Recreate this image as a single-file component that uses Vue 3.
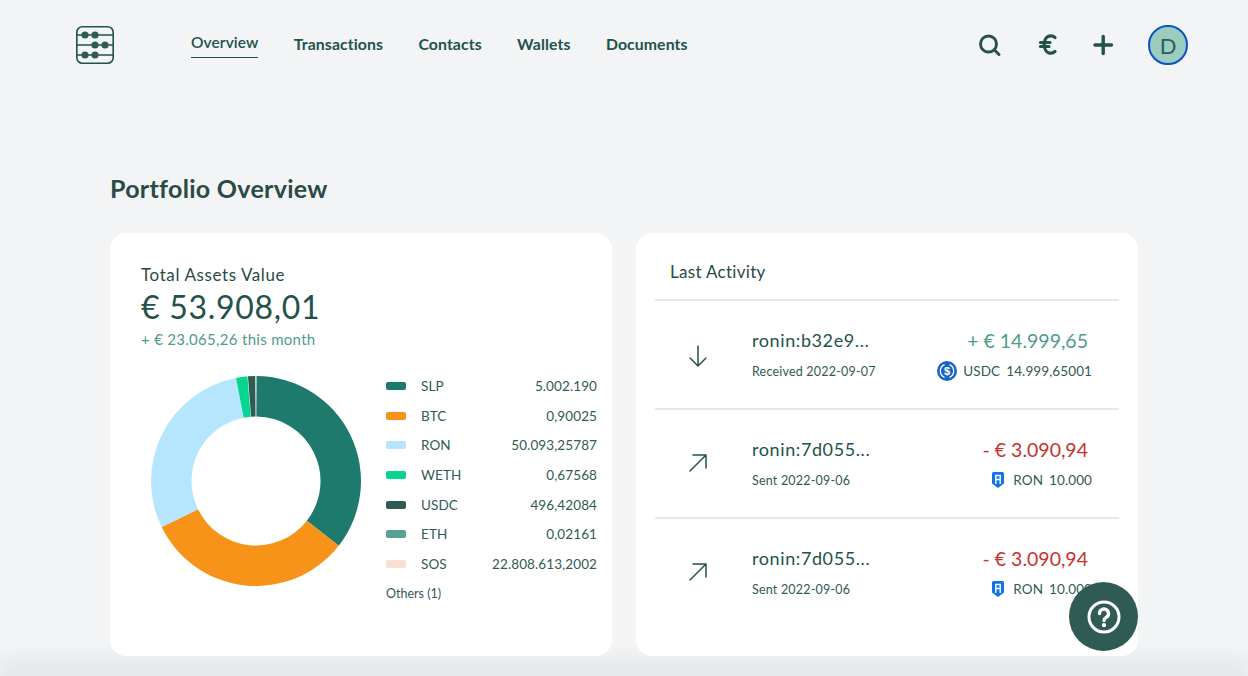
<script setup>
const tabs = ['Overview', 'Transactions', 'Contacts', 'Wallets', 'Documents']
const legend = [
  { name: 'SLP', value: '5.002.190', color: '#1f7a6e' },
  { name: 'BTC', value: '0,90025', color: '#f79319' },
  { name: 'RON', value: '50.093,25787', color: '#b5e6fd' },
  { name: 'WETH', value: '0,67568', color: '#06d58f' },
  { name: 'USDC', value: '496,42084', color: '#2f5b54' },
  { name: 'ETH', value: '0,02161', color: '#58a193' },
  { name: 'SOS', value: '22.808.613,2002', color: '#f8dfd2' },
]
const segments = [
  { from: 0.3, to: 128, color: '#1f7a6e' },
  { from: 128, to: 244, color: '#f79319' },
  { from: 244, to: 349, color: '#b5e6fd' },
  { from: 349, to: 355.3, color: '#06d58f' },
  { from: 355.6, to: 359.6, color: '#2f5b54' },
]
function pt(r, a) {
  const t = (a * Math.PI) / 180
  return `${(106 + r * Math.sin(t)).toFixed(2)} ${(106 - r * Math.cos(t)).toFixed(2)}`
}
function arc(s) {
  const large = s.to - s.from > 180 ? 1 : 0
  return `M${pt(105, s.from)}A105 105 0 ${large} 1 ${pt(105, s.to)}L${pt(64.5, s.to)}A64.5 64.5 0 ${large} 0 ${pt(64.5, s.from)}Z`
}
const activity = [
  { addr: 'ronin:b32e9...', sub: 'Received 2022-09-07', amount: '+ € 14.999,65', cls: 'pos', token: 'USDC', qty: '14.999,65001', dir: 'in' },
  { addr: 'ronin:7d055...', sub: 'Sent 2022-09-06', amount: '- € 3.090,94', cls: 'neg', token: 'RON', qty: '10.000', dir: 'out' },
  { addr: 'ronin:7d055...', sub: 'Sent 2022-09-06', amount: '- € 3.090,94', cls: 'neg', token: 'RON', qty: '10.000', dir: 'out' },
]
</script>

<template>
  <div class="page">
    <header class="topbar">
      <svg class="logo" width="38" height="38" viewBox="0 0 38 38" fill="none" stroke="#22524a" stroke-width="1.6">
        <rect x="0.8" y="0.8" width="36.4" height="36.4" rx="5.5" />
        <path d="M1 9h36M1 19h36M1 29h36" />
        <g fill="#2f5b54" stroke="none">
          <circle cx="9" cy="9" r="3.6" /><circle cx="19" cy="9" r="3.6" />
          <circle cx="19" cy="19" r="3.6" /><circle cx="29" cy="19" r="3.6" />
          <circle cx="9" cy="29" r="3.6" /><circle cx="19" cy="29" r="3.6" />
        </g>
      </svg>
      <nav class="tabs">
        <a v-for="(t, i) in tabs" :key="t" class="tab" :class="{ active: i === 0 }">{{ t }}</a>
      </nav>
      <div class="actions">
        <svg width="24" height="24" viewBox="0 0 24 24" fill="none" stroke="#22524a" stroke-width="2.9" stroke-linecap="round">
          <circle cx="10.500" cy="11" r="8" /><path d="M16.500 17l4.500 4.500" />
        </svg>
        <svg width="24" height="24" viewBox="0 0 24 24" fill="none" stroke="#22524a" stroke-width="3.2" stroke-linecap="round">
          <path d="M20 4.500C18.800 3.200 17.300 2.800 15.800 2.800 11.800 2.800 9.200 6.400 9.200 11.500s2.600 8.700 6.600 8.700c1.500 0 3-.5 4.200-1.800M5.500 9.500h9.500M5.500 13.500h8.500" />
        </svg>
        <svg width="24" height="24" viewBox="0 0 24 24" fill="none" stroke="#22524a" stroke-width="3.4" stroke-linecap="round">
          <path d="M11.200 3.500v17M3 12h16.500" />
        </svg>
        <div class="avatar">D</div>
      </div>
    </header>

    <main class="content">
      <h1 class="title">Portfolio Overview</h1>
      <div class="cards">
        <section class="card assets">
          <div class="assets-label">Total Assets Value</div>
          <div class="assets-value">€ 53.908,01</div>
          <div class="assets-delta">+ € 23.065,26 this month</div>
          <div class="chart-row">
            <svg class="donut" width="212" height="212" viewBox="0 0 212 212">
              <path v-for="s in segments" :key="s.from" :d="arc(s)" :fill="s.color" />
            </svg>
            <div class="legend">
              <div v-for="l in legend" :key="l.name" class="legend-row">
                <span class="swatch" :style="{ background: l.color }"></span>
                <span class="legend-name">{{ l.name }}</span>
                <span class="legend-value">{{ l.value }}</span>
              </div>
              <div class="others">Others (1)</div>
            </div>
          </div>
        </section>

        <section class="card activity">
          <div class="activity-head">Last Activity</div>
          <div v-for="(a, i) in activity" :key="i" class="row">
            <div class="dir">
              <svg v-if="a.dir === 'in'" width="22" height="26" viewBox="0 0 22 26" fill="none" stroke="#22524a" stroke-width="1.5" stroke-linecap="round" stroke-linejoin="round">
                <path d="M11 3v20M3 15l8 8 8-8" />
              </svg>
              <svg v-else width="22" height="22" viewBox="0 0 22 22" fill="none" stroke="#22524a" stroke-width="1.5" stroke-linecap="round" stroke-linejoin="round">
                <path d="M3 19L19 3M6 3h13v13" />
              </svg>
            </div>
            <div class="who">
              <div class="addr">{{ a.addr }}</div>
              <div class="sub">{{ a.sub }}</div>
            </div>
            <div class="money">
              <div class="amount" :class="a.cls">{{ a.amount }}</div>
              <div class="token">
                <svg v-if="a.token === 'USDC'" class="usdc" width="20" height="20" viewBox="0 0 20 20">
                  <circle cx="10" cy="10" r="10" fill="#1866c0" />
                  <path d="M7.500 3.600a7 7 0 0 0 0 12.800M12.500 3.600a7 7 0 0 1 0 12.800" fill="none" stroke="#fff" stroke-width="1.300" />
                  <text x="10" y="13.600" text-anchor="middle" class="usdc-sign">$</text>
                </svg>
                <svg v-else class="ron" width="12" height="16" viewBox="0 0 12 16">
                  <path d="M1.500 0h9A1.500 1.500 0 0 1 12 1.500V11.500L6 16 0 11.500V1.500A1.500 1.500 0 0 1 1.500 0z" fill="#1273ea" />
                  <path d="M3.800 12V3.500h4.400V12M3.800 7.500h4.400" fill="none" stroke="#fff" stroke-width="1.400" />
                </svg>
                <span class="token-name">{{ a.token }}</span>
                <span>{{ a.qty }}</span>
              </div>
            </div>
          </div>
        </section>
      </div>
    </main>

    <button class="help" aria-label="Help">
      <svg width="34" height="34" viewBox="0 0 34 34" fill="none" stroke="#fff">
        <circle cx="17" cy="17" r="15" stroke-width="3" />
        <path d="M12.500 13.500a4.500 4.500 0 1 1 7 3.700c-1.600 1.100-2.500 1.900-2.500 3.300" stroke-width="3.400" stroke-linecap="round" />
        <circle cx="17" cy="25.200" r="2.100" fill="#fff" stroke="none" />
      </svg>
    </button>
    <div class="bottom-shade"></div>
  </div>
</template>

<style>
html, body { margin: 0; background: #f2f4f6; }
</style>

<style scoped>
.page {
  position: relative;
  width: 1248px;
  height: 676px;
  overflow: hidden;
  background: #f2f4f6;
  color: #22524a;
  font-family: Lato, "Open Sans", sans-serif;
}
.topbar {
  display: flex;
  align-items: center;
  height: 38px;
  padding: 26px 60px 0 76px;
}
.logo { flex: none; }
.tabs {
  display: flex;
  align-items: center;
  gap: 35.400px;
  margin-left: 77px;
  transform: translateY(-1px);
}
.tab {
  font-size: 15.800px;
  font-weight: 700;
  line-height: 20px;
  color: #22524a;
  letter-spacing: 0.1px;
}
.tab.active {
  font-weight: 600;
  font-size: 15.500px;
  padding-bottom: 5px;
  margin-top: 2px;
  border-bottom: 1px solid #22524a;
}
.actions {
  display: flex;
  align-items: center;
  margin-left: auto;
  gap: 33px;
}
.avatar {
  width: 36px;
  height: 36px;
  border: 2px solid #0a53c4;
  border-radius: 50%;
  background: #9accc0;
  color: #2f5b54;
  display: flex;
  align-items: center;
  justify-content: center;
  font-size: 22px;
  margin-left: -1px;
}
.content {
  position: relative;
  z-index: 1;
  padding: 0 110px;
}
.title {
  margin: 0;
  padding-top: 109px;
  font-size: 25px;
  line-height: 30px;
  font-weight: 700;
  color: #2a4a45;
  letter-spacing: 0.3px;
}
.cards {
  display: grid;
  grid-template-columns: 502px 502px;
  gap: 24px;
  margin-top: 30px;
}
.card {
  background: #fff;
  border-radius: 16px;
  height: 423px;
  box-sizing: border-box;
}
.assets { padding: 32px 15px 0 31px; }
.assets-label { font-size: 17px; line-height: 20px; color: #2a4a45; letter-spacing: 0.6px; }
.assets-value {
  font-size: 32px;
  line-height: 40px;
  letter-spacing: 0.7px;
  color: #22524a;
  margin-top: 2px;
}
.assets-delta {
  font-size: 15px;
  line-height: 20px;
  color: #4f9b8b;
  margin-top: 2px;
  letter-spacing: 0.3px;
}
.chart-row {
  display: flex;
  margin-top: 26px;
}
.donut { flex: none; margin-left: 9px; }
.legend {
  flex: 1;
  margin-left: 24px;
  margin-top: -4px;
}
.legend-row {
  display: flex;
  align-items: center;
  height: 29.700px;
  font-size: 13.500px;
  color: #2f5b54;
  letter-spacing: 0.1px;
}
.swatch {
  width: 20px;
  height: 8px;
  border-radius: 2px;
  flex: none;
}
.legend-name { margin-left: 15px; }
.legend-value { margin-left: auto; }
.others {
  font-size: 12.500px;
  line-height: 18px;
  color: #2f5b54;
  margin-top: 6px;
}
.activity { padding: 0 19px; }
.activity-head {
  font-size: 17px;
  line-height: 20px;
  color: #2a4a45;
  letter-spacing: 0.3px;
  padding: 29px 0 17px 15px;
  border-bottom: 2px solid #e6e8ea;
}
.row {
  display: flex;
  height: 107px;
  border-bottom: 2px solid #e6e8ea;
}
.row:last-child { border-bottom: 0; }
.dir {
  width: 97px;
  flex: none;
  padding: 42px 0 0 32px;
  box-sizing: border-box;
}
.who { padding-top: 27px; flex: 1; }
.addr { font-size: 18px; line-height: 24px; color: #22524a; letter-spacing: 0.6px; }
.sub { font-size: 12.500px; line-height: 16px; margin-top: 12px; color: #2f5b54; letter-spacing: 0.2px; }
.money {
  padding: 28px 27px 0 0;
  display: flex;
  flex-direction: column;
  align-items: flex-end;
}
.amount {
  font-size: 19.500px;
  line-height: 24px;
  padding-right: 4px;
}
.pos { color: #4f9b8b; }
.neg { color: #c8322b; }
.token {
  display: flex;
  align-items: center;
  gap: 6px;
  font-size: 13.500px;
  height: 20px;
  line-height: 16px;
  margin-top: 8px;
  color: #2f5b54;
  letter-spacing: 0.1px;
}
.usdc-sign { font-size: 11px; font-weight: 700; fill: #fff; font-family: "Liberation Sans", sans-serif; }
.ron { margin-right: 3px; }
.help {
  position: absolute;
  z-index: 2;
  left: 1069px;
  top: 582px;
  width: 69px;
  height: 69px;
  border: 0;
  padding: 0;
  border-radius: 50%;
  background: #2f5b54;
  display: flex;
  align-items: center;
  justify-content: center;
}
.bottom-shade {
  position: absolute;
  left: 0;
  right: 0;
  bottom: -6px;
  height: 6px;
  box-shadow: 0 -6px 26px 6px rgba(0, 0, 0, 0.09);
  pointer-events: none;
}
</style>
